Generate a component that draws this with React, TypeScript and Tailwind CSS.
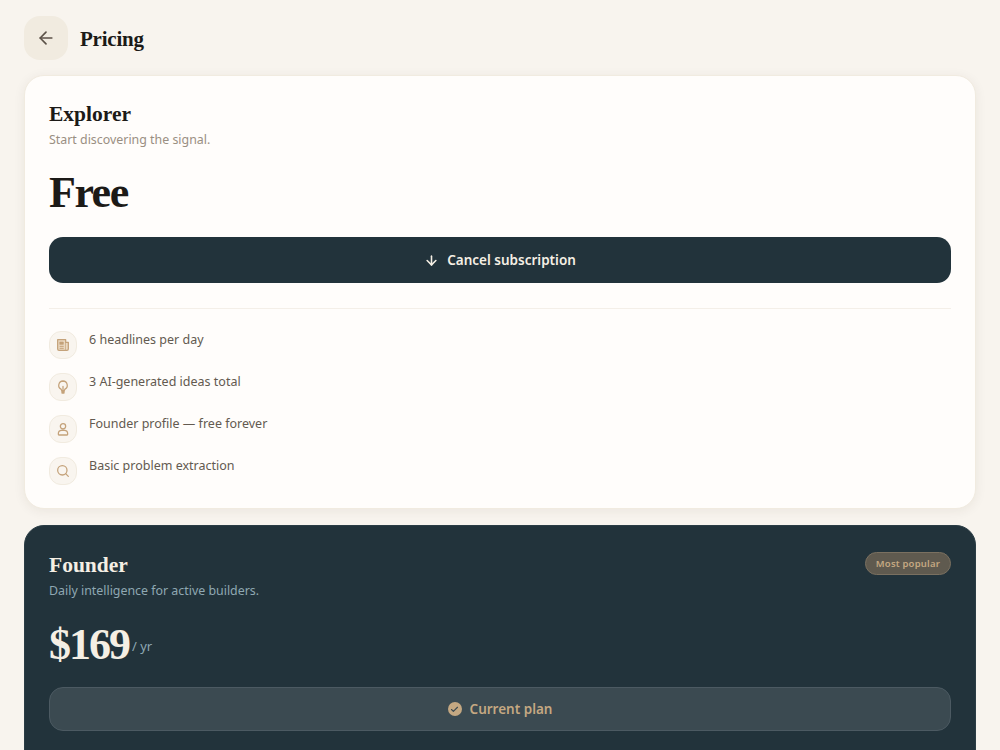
import type { ReactNode } from 'react';
import { ArrowDown, ArrowLeft, Check } from 'lucide-react';

const sans = "font-['Noto_Sans',sans-serif]";
const serif = "font-['Liberation_Serif',serif]";

function Glyph({ children }: { children: ReactNode }) {
  return (
    <svg width="16" height="16" viewBox="0 0 24 24" fill="none" stroke="currentColor" strokeWidth="1.9" strokeLinecap="round" strokeLinejoin="round">
      {children}
    </svg>
  );
}

const features: { icon: ReactNode; label: string }[] = [
  {
    label: '6 headlines per day',
    icon: (
      <Glyph>
        <path d="M4 4h12v16H6a2 2 0 0 1-2-2z" fill="#ead9c2" />
        <path d="M16 8h4v10a2 2 0 0 1-2 2h-2" fill="#ead9c2" />
        <path d="M7.5 7.5h5v3.5h-5z" fill="currentColor" strokeWidth="1" />
        <path d="M7.5 14h5M7.5 17h5" strokeWidth="1.5" />
      </Glyph>
    ),
  },
  {
    label: '3 AI-generated ideas total',
    icon: (
      <Glyph>
        <path d="M12 3a6.5 6.5 0 0 0-3 12.2l1.5 2.8h3l1.5-2.8A6.5 6.5 0 0 0 12 3z" />
        <path d="M12 11v7M10.5 18v3h3v-3" fill="currentColor" />
      </Glyph>
    ),
  },
  {
    label: 'Founder profile — free forever',
    icon: (
      <Glyph>
        <circle cx="12" cy="8" r="4" />
        <path d="M5 20v-1a5 5 0 0 1 5-5h4a5 5 0 0 1 5 5v1a1 1 0 0 1-1 1H6a1 1 0 0 1-1-1z" />
      </Glyph>
    ),
  },
  {
    label: 'Basic problem extraction',
    icon: (
      <Glyph>
        <circle cx="11" cy="11" r="7" />
        <path d="m20 20-4-4" />
      </Glyph>
    ),
  },
];

export default function App() {
  return (
    <div className={`${sans} h-screen overflow-hidden bg-[#f8f4ee] px-6 pt-4`}>
      <header className="flex items-center gap-3">
        <button className="flex h-11 w-11 items-center justify-center rounded-2xl bg-[#f1ebe0] text-[#5c5248]">
          <ArrowLeft size={20} strokeWidth={2} />
        </button>
        <h1 className={`${serif} pt-[3px] text-[21px] font-bold tracking-[-0.01em] text-[#1c1a17]`}>Pricing</h1>
      </header>

      <section className="mt-[15px] rounded-[20px] border border-[#f1ebe0] bg-[#fffdfb] p-6 pt-[23px] pb-[23px] shadow-[0_2px_12px_rgba(60,45,25,0.07)]">
        <h2 className={`${serif} text-[21.5px] leading-[30px] font-bold text-[#1c1a17]`}>Explorer</h2>
        <p className="mt-[2px] text-[12.4px] leading-[18px] text-[#9a8f82]">Start discovering the signal.</p>
        <div className={`${serif} mt-[14px] text-[44px] leading-[60px] font-bold tracking-[-1.5px] text-[#1c1a17]`}>Free</div>
        <button className="mt-[14px] flex h-[46px] w-full items-center justify-center gap-2 rounded-[14px] bg-[#22333b] text-[13.5px] font-semibold text-[#f5efe4]">
          <ArrowDown size={15} strokeWidth={2.5} />
          Cancel subscription
        </button>
        <hr className="mt-[25px] border-[#f4efe8]" />
        <ul className="mt-[22px] flex flex-col gap-[14px]">
          {features.map(({ icon, label }) => (
            <li key={label} className="flex items-start gap-3">
              <span className="flex h-7 w-7 items-center justify-center rounded-xl border border-[#f1ebe0] bg-[#f9f5ef] text-[#c4a27a]">
                {icon}
              </span>
              <span className="text-[12.5px] leading-[18px] text-[#635a50]">{label}</span>
            </li>
          ))}
        </ul>
      </section>

      <section className="mt-[16px] rounded-t-[20px] border border-[#2b3d45] bg-[#22333b] p-6 pb-10">
        <div className="flex items-start justify-between">
          <div>
            <h2 className={`${serif} text-[21.5px] leading-[30px] font-bold text-[#f5efe4]`}>Founder</h2>
            <p className="mt-[2px] text-[12.4px] leading-[18px] text-[#8fa8b2]">Daily intelligence for active builders.</p>
          </div>
          <span className="mt-[2px] rounded-full border border-[#7a7060] bg-[#5f5a4f] px-[10px] py-[3px] text-[9.5px] leading-[15px] font-semibold tracking-[0.02em] text-[#c4a882]">
            Most popular
          </span>
        </div>
        <div className="mt-[15px] flex items-center gap-[3px]">
          <span className={`${serif} text-[44px] leading-[60px] font-bold tracking-[-2px] text-[#f5efe4]`}>$169</span>
          <span className="pt-[4px] text-[13px] text-[#8fa8b2]">/ yr</span>
        </div>
        <button className="mt-[12px] flex h-[44px] w-full items-center justify-center gap-2 rounded-[14px] border border-[#4c5a62] bg-[#3b4a51] text-[13.5px] font-semibold text-[#c4a882]">
          <span className="flex h-[14px] w-[14px] items-center justify-center rounded-full bg-[#c4a882] text-[#3b4a51]">
            <Check size={9} strokeWidth={3} />
          </span>
          Current plan
        </button>
      </section>
    </div>
  );
}
